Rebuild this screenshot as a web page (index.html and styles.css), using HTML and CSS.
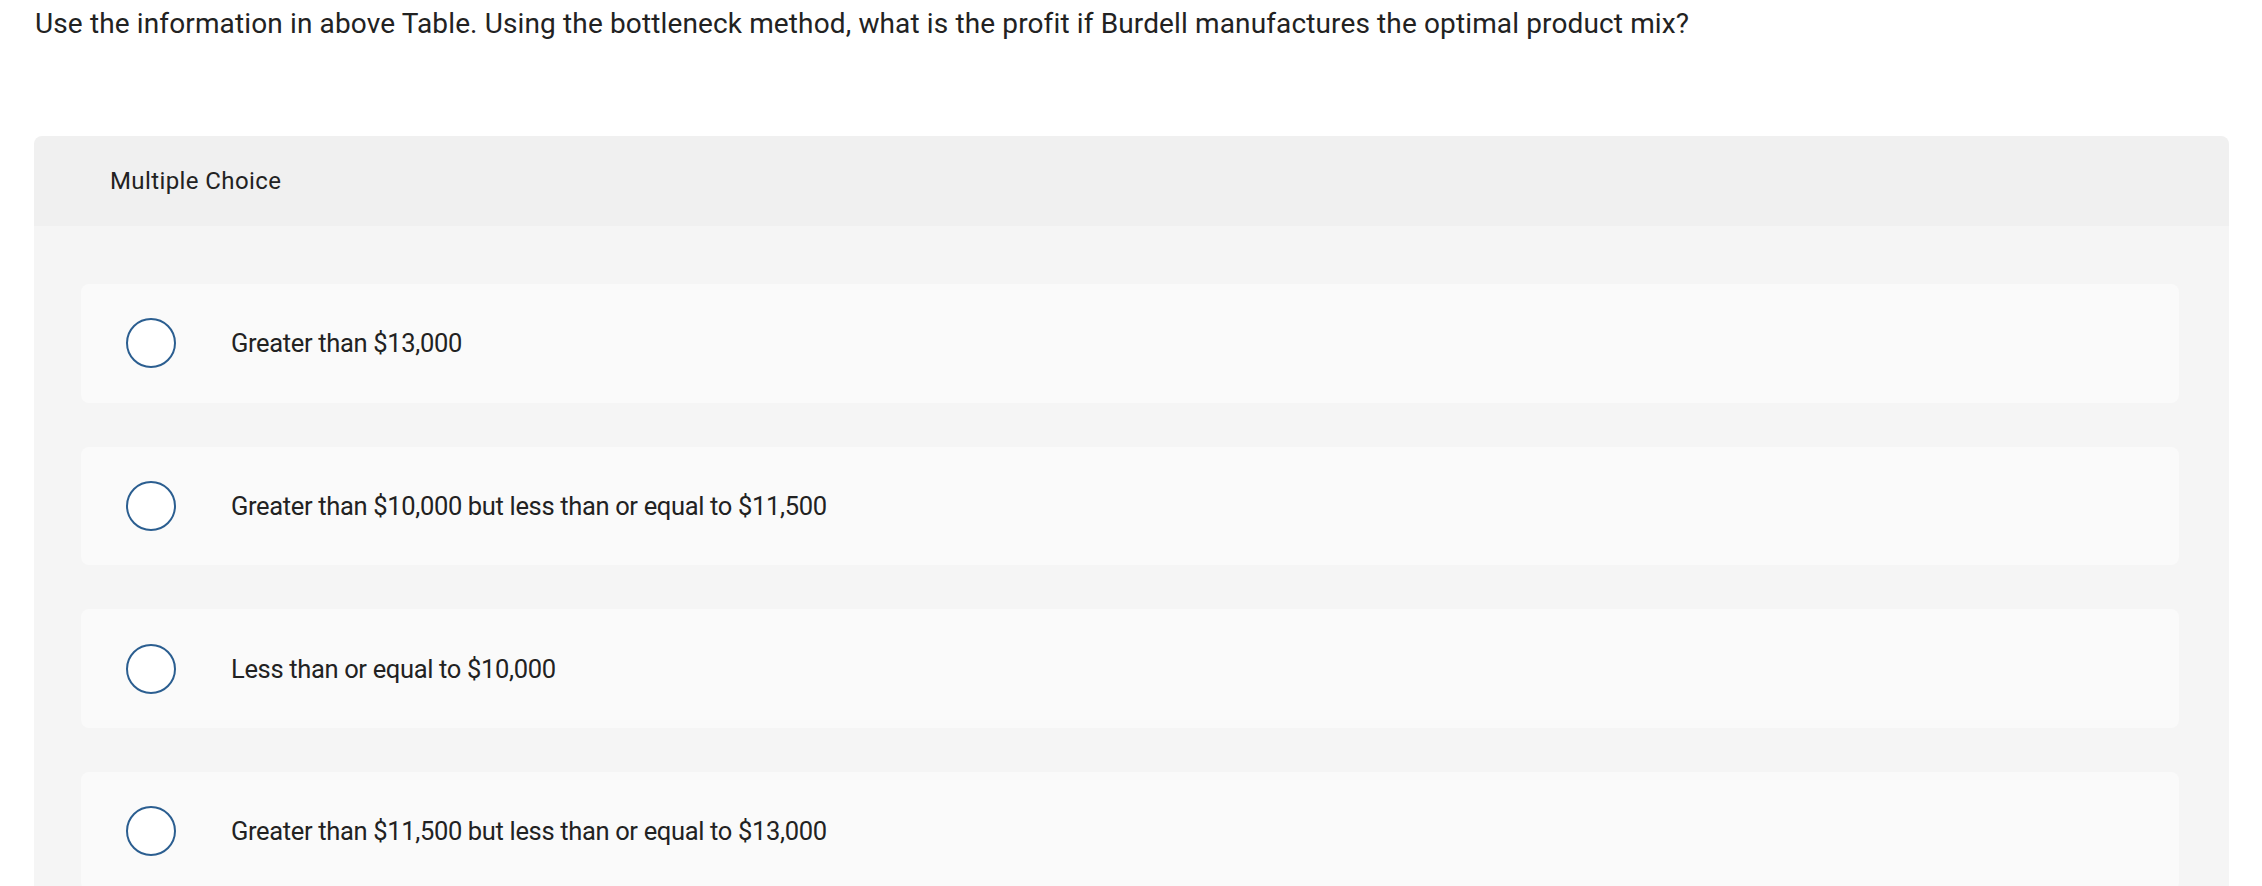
FILE: index.html
```html
<!DOCTYPE html>
<html lang="en">
<head>
<meta charset="utf-8">
<title>Multiple Choice</title>
<link rel="stylesheet" href="styles.css">
</head>
<body>
<p class="question">Use the information in above Table. Using the bottleneck method, what is the profit if Burdell manufactures the optimal product mix?</p>
<section class="card">
  <div class="card-header">Multiple Choice</div>
  <div class="card-body">
    <label class="option"><span class="radio"></span><span class="option-text">Greater than $13,000</span></label>
    <label class="option"><span class="radio"></span><span class="option-text">Greater than $10,000 but less than or equal to $11,500</span></label>
    <label class="option"><span class="radio"></span><span class="option-text">Less than or equal to $10,000</span></label>
    <label class="option"><span class="radio"></span><span class="option-text">Greater than $11,500 but less than or equal to $13,000</span></label>
  </div>
</section>
</body>
</html>
```

FILE: styles.css
```css
html, body {
  margin: 0;
  padding: 0;
  background: #ffffff;
  overflow: hidden;
}
body {
  font-family: "Roboto", "Noto Sans", sans-serif;
  color: #222222;
}
.question {
  margin: 0;
  padding: 7px 0 0 35px;
  font-size: 28px;
  letter-spacing: 0.13px;
  line-height: 34px;
  height: 128px;
  box-sizing: border-box;
}
.card {
  margin: 8px 33px 0 34px;
  border-radius: 8px 8px 0 0;
  overflow: hidden;
}
.card-header {
  height: 90px;
  background: #f0f0f0;
  display: flex;
  align-items: center;
  padding-left: 76px;
  font-size: 24px;
  letter-spacing: 0.4px;
}
.card-body {
  background: #f5f5f5;
  padding: 58px 50px 40px 47px;
  display: flex;
  flex-direction: column;
  gap: 44px;
}
.option {
  height: 118.67px;
  background: #fafafa;
  border-radius: 8px;
  display: flex;
  align-items: center;
  padding-left: 45px;
  box-sizing: border-box;
}
.radio {
  width: 50px;
  height: 50px;
  border-radius: 50%;
  border: 2px solid #2b5e90;
  background: #ffffff;
  box-sizing: border-box;
  flex: none;
}
.option-text {
  margin-left: 55px;
  font-size: 25.5px;
  letter-spacing: -0.34px;
}
```
